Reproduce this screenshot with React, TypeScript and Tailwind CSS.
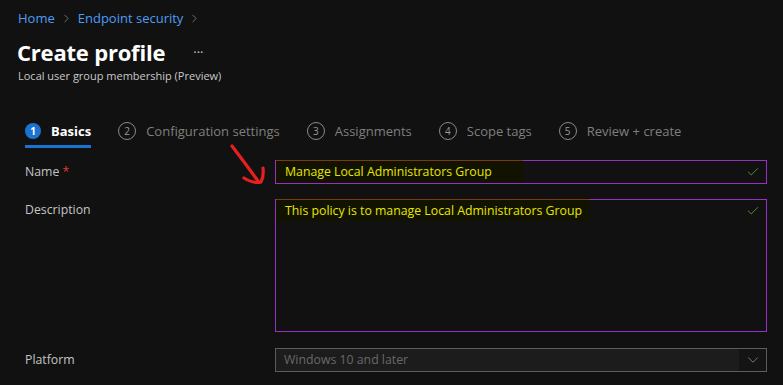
import { ChevronRight, Check, ChevronDown } from "lucide-react";

const steps = [
    { n: 1, label: "Basics", active: true },
    { n: 2, label: "Configuration settings" },
    { n: 3, label: "Assignments" },
    { n: 4, label: "Scope tags" },
    { n: 5, label: "Review + create" },
];

export default function App() {
    return (
        <main className="w-[783px] h-[385px] bg-[#111111] text-white relative overflow-hidden font-['Open_Sans',sans-serif]">
            {/* Breadcrumb */}
            <nav className="flex items-center pt-[8px] pl-[18px] text-[13px] text-[#4f9cf6] leading-[20px]">
                <span>Home</span>
                <ChevronRight className="w-[13px] h-[13px] mx-[5px] text-[#8a8a8a]" strokeWidth={1.5} />
                <span>Endpoint security</span>
                <ChevronRight className="w-[13px] h-[13px] mx-[5px] text-[#8a8a8a]" strokeWidth={1.5} />
            </nav>

            {/* Header */}
            <div className="pl-[17px] mt-[9px] flex items-center">
                <h1 className="text-[22px] font-bold leading-[30px] tracking-[-0.2px]">Create profile</h1>
                <span className="ml-[28px] text-[13px] text-[#c8c8c8] mt-[2px]">···</span>
            </div>
            <p className="pl-[18px] text-[11px] text-[#c8c8c8] leading-[16px] mt-[1px]">Local user group membership (Preview)</p>

            {/* Steps */}
            <div className="flex items-start pl-[25px] mt-[38px] gap-[27px]">
                {steps.map((s) => (
                    <div key={s.n} className="flex flex-col">
                        <div className="flex items-center h-[18px]">
                            {s.active ? (
                                <span className="w-[16px] h-[16px] rounded-full bg-[#1a73d0] text-white text-[10px] font-bold flex items-center justify-center">{s.n}</span>
                            ) : (
                                <span className="w-[18px] h-[18px] rounded-full border border-[#8a8a8a] text-[#9a9a9a] text-[10px] flex items-center justify-center">{s.n}</span>
                            )}
                            <span className={`ml-[10px] text-[13px] leading-[18px] ${s.active ? "font-bold text-white" : "text-[#7f7f7f]"}`}>{s.label}</span>
                        </div>
                        {s.active && <div className="h-[3px] bg-[#1a73d0] mt-[5px]" />}
                    </div>
                ))}
            </div>

            {/* Form */}
            <div className="pl-[25px] pr-[16px] mt-[12px] text-[12.3px]">
                <div className="flex items-center h-[24px]">
                    <label className="w-[250px] text-[#c4c4c4]">Name <span className="text-[#e23a3a]">*</span></label>
                    <div className="relative flex-1 h-[24px] border border-[#9a2fc4] flex items-center pl-[9px]">
                        <div className="absolute left-0 top-[-1px] w-[247px] h-[23px] bg-[#121200] border-t border-[#7a3a10]" />
                        <span className="relative text-[#e6e600]">Manage Local Administrators Group</span>
                        <Check className="absolute right-[6px] w-[14px] h-[14px] text-[#5d9c3a]" strokeWidth={1.5} />
                    </div>
                </div>

                <div className="flex items-start mt-[15px]">
                    <label className="w-[250px] text-[#c4c4c4] pt-[2px]">Description</label>
                    <div className="relative flex-1 h-[133px] border border-[#9a2fc4] pl-[9px] pt-[2px]">
                        <div className="absolute left-0 top-[-1px] w-[313px] h-[22px] bg-[#121200] border-t border-[#7a3a10]" />
                        <span className="relative text-[#e6e600]">This policy is to manage Local Administrators Group</span>
                        <Check className="absolute right-[6px] top-[4px] w-[14px] h-[14px] text-[#5d9c3a]" strokeWidth={1.5} />
                    </div>
                </div>

                <div className="flex items-center h-[24px] mt-[16px]">
                    <label className="w-[250px] text-[#c4c4c4]">Platform</label>
                    <div className="flex-1 h-[24px] border border-[#5c5c5c] bg-[#1c1c1c] flex items-center pl-[8px]">
                        <span className="flex-1 text-[#686868]">Windows 10 and later</span>
                        <span className="w-[27px] h-full bg-[#141414] flex items-center justify-center">
                            <ChevronDown className="w-[18px] h-[18px] text-[#9a9a9a]" strokeWidth={1} />
                        </span>
                    </div>
                </div>
            </div>

            {/* Annotation arrow */}
            <svg className="absolute left-0 top-0 pointer-events-none" width="783" height="385" viewBox="0 0 783 385">
                <path d="M232 146 Q245 163 258 181" stroke="#e5201d" strokeWidth="3.2" fill="none" strokeLinecap="round" />
                <path d="M244 178 Q254 184 261 182 Q264 176 263 168" stroke="#e5201d" strokeWidth="3.2" fill="none" strokeLinecap="round" strokeLinejoin="round" />
            </svg>
        </main>
    );
}
